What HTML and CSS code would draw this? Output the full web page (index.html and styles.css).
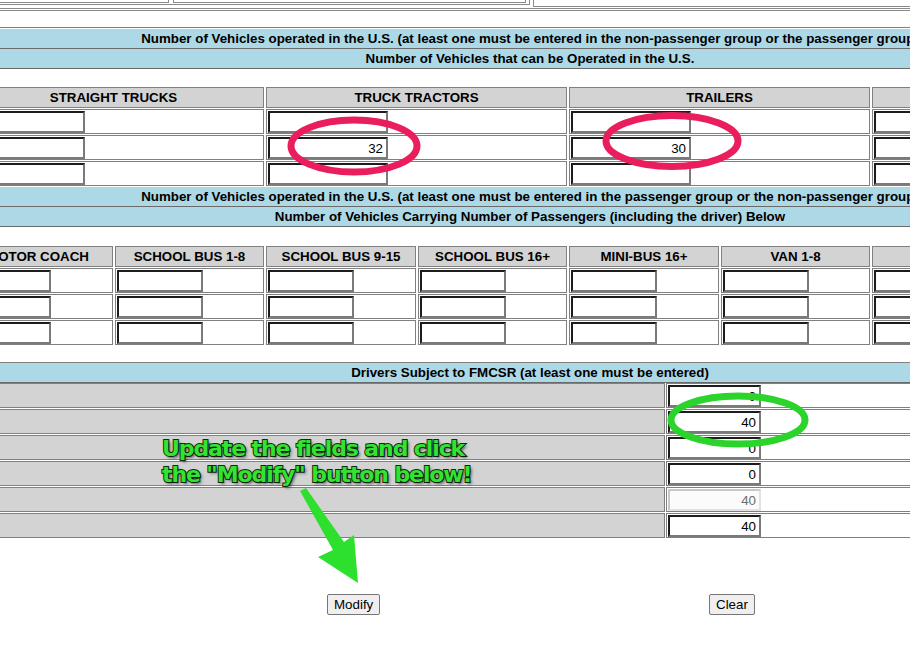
FILE: index.html
```html
<!DOCTYPE html>
<html>
<head>
<meta charset="utf-8">
<link rel="stylesheet" href="styles.css">
</head>
<body>
<div class="page">
  <div class="prev">
    <div class="prev-inner">
      <div class="prev-left">
        <div class="pl-a"></div>
        <div class="pl-b"></div>
      </div>
      <div class="prev-right"></div>
    </div>
  </div>

  <div class="blue-group first">
    <div class="bar">Number of Vehicles operated in the U.S. (at least one must be entered in the non-passenger group or the passenger group)</div>
    <div class="bar">Number of Vehicles that can be Operated in the U.S.</div>
  </div>

  <div class="vgrid trucks">
    <div class="hcell">STRAIGHT TRUCKS</div>
    <div class="hcell">TRUCK TRACTORS</div>
    <div class="hcell">TRAILERS</div>
    <div class="hcell"></div>
    <div class="hcell"></div>

    <div class="dcell"><input class="in w-t" type="text"></div>
    <div class="dcell"><input class="in w-t" type="text"></div>
    <div class="dcell"><input class="in w-t" type="text"></div>
    <div class="dcell"><input class="in w-t" type="text"></div>
    <div class="dcell"><input class="in w-t" type="text"></div>

    <div class="dcell"><input class="in w-t" type="text"></div>
    <div class="dcell"><input class="in w-t" type="text" value="32"></div>
    <div class="dcell"><input class="in w-t" type="text" value="30"></div>
    <div class="dcell"><input class="in w-t" type="text"></div>
    <div class="dcell"><input class="in w-t" type="text"></div>

    <div class="dcell"><input class="in w-t" type="text"></div>
    <div class="dcell"><input class="in w-t" type="text"></div>
    <div class="dcell"><input class="in w-t" type="text"></div>
    <div class="dcell"><input class="in w-t" type="text"></div>
    <div class="dcell"><input class="in w-t" type="text"></div>
  </div>

  <div class="blue-group tight">
    <div class="bar">Number of Vehicles operated in the U.S. (at least one must be entered in the passenger group or the non-passenger group)</div>
    <div class="bar">Number of Vehicles Carrying Number of Passengers (including the driver) Below</div>
  </div>

  <div class="vgrid pass">
    <div class="hcell">MOTOR COACH</div>
    <div class="hcell">SCHOOL BUS 1-8</div>
    <div class="hcell">SCHOOL BUS 9-15</div>
    <div class="hcell">SCHOOL BUS 16+</div>
    <div class="hcell">MINI-BUS 16+</div>
    <div class="hcell">VAN 1-8</div>
    <div class="hcell"></div>

    <div class="dcell"><input class="in w-p" type="text"></div>
    <div class="dcell"><input class="in w-p" type="text"></div>
    <div class="dcell"><input class="in w-p" type="text"></div>
    <div class="dcell"><input class="in w-p" type="text"></div>
    <div class="dcell"><input class="in w-p" type="text"></div>
    <div class="dcell"><input class="in w-p" type="text"></div>
    <div class="dcell"><input class="in w-p" type="text"></div>

    <div class="dcell"><input class="in w-p" type="text"></div>
    <div class="dcell"><input class="in w-p" type="text"></div>
    <div class="dcell"><input class="in w-p" type="text"></div>
    <div class="dcell"><input class="in w-p" type="text"></div>
    <div class="dcell"><input class="in w-p" type="text"></div>
    <div class="dcell"><input class="in w-p" type="text"></div>
    <div class="dcell"><input class="in w-p" type="text"></div>

    <div class="dcell"><input class="in w-p" type="text"></div>
    <div class="dcell"><input class="in w-p" type="text"></div>
    <div class="dcell"><input class="in w-p" type="text"></div>
    <div class="dcell"><input class="in w-p" type="text"></div>
    <div class="dcell"><input class="in w-p" type="text"></div>
    <div class="dcell"><input class="in w-p" type="text"></div>
    <div class="dcell"><input class="in w-p" type="text"></div>
  </div>

  <div class="blue-group drivers">
    <div class="bar">Drivers Subject to FMCSR (at least one must be entered)</div>
  </div>

  <div class="dgrid">
    <div class="lcell"></div>
    <div class="dcell"><input class="in w-d" type="text" value="0"></div>
    <div class="lcell"></div>
    <div class="dcell"><input class="in w-d" type="text" value="40"></div>
    <div class="lcell"></div>
    <div class="dcell"><input class="in w-d" type="text" value="0"></div>
    <div class="lcell"></div>
    <div class="dcell"><input class="in w-d" type="text" value="0"></div>
    <div class="lcell"></div>
    <div class="dcell"><input class="in w-d" type="text" value="40" disabled></div>
    <div class="lcell"></div>
    <div class="dcell"><input class="in w-d" type="text" value="40"></div>
  </div>

  <div class="actions">
    <button class="btn" type="button">Modify</button>
    <button class="btn" type="button">Clear</button>
  </div>
</div>

<div class="overlay">
  <svg class="marks" width="910" height="661" viewBox="0 0 910 661">
    <ellipse cx="354" cy="146" rx="63" ry="26" fill="none" stroke="#ea1e5d" stroke-width="7"/>
    <ellipse cx="672" cy="141" rx="66" ry="25.5" fill="none" stroke="#ea1e5d" stroke-width="7"/>
    <ellipse cx="738" cy="420" rx="67" ry="24" fill="none" stroke="#2bd42b" stroke-width="7"/>
    <polygon points="300,491 306,488 344,542 354,535 358,583 318,557 333,550" fill="#2ee02e"/>
  </svg>
  <div class="note">Update the fields and click<br>the "Modify" button below!</div>
</div>
</body>
</html>
```

FILE: styles.css
```css
* { box-sizing: border-box; }

body {
  margin: 0;
  width: 910px;
  height: 661px;
  overflow: hidden;
  position: relative;
  background: #ffffff;
  font-family: "Liberation Sans", Arial, sans-serif;
  color: #000;
}

.page {
  margin-left: -37px;
  width: 1134px;
}

/* remnants of the table above */
.prev {
  padding-bottom: 1px;
  border-bottom: 1px solid #8a8a8a;
}
.prev-inner {
  display: flex;
  height: 9px;
  border-bottom: 1px solid #8a8a8a;
}
.prev-left {
  display: flex;
  width: 567px;
  height: 5px;
  border-right: 1px solid #8a8a8a;
  border-bottom: 1px solid #8a8a8a;
}
.pl-a {
  width: 206px;
  height: 3px;
  border-right: 1px solid #8a8a8a;
  border-bottom: 1px solid #8a8a8a;
}
.pl-b {
  flex: 1;
  height: 3px;
  margin-left: 4px;
  margin-right: 3px;
  border-left: 1px solid #8a8a8a;
  border-right: 1px solid #8a8a8a;
  border-bottom: 1px solid #8a8a8a;
}
.prev-right {
  flex: 1;
  height: 7px;
  margin-left: 3px;
  border-left: 1px solid #8a8a8a;
  border-bottom: 1px solid #8a8a8a;
}

/* blue title bars */
.blue-group.first {
  margin-top: 16px;
  border-top: 1px solid #808080;
  padding-top: 1px;
}
.blue-group.tight {
  margin-top: 1px;
}
.blue-group.drivers {
  margin-top: 17px;
  border-top: 1px solid #808080;
}
.bar {
  height: 20px;
  line-height: 19px;
  background: #add8e6;
  border-bottom: 1px solid #6a6a6a;
  text-align: center;
  font-weight: bold;
  font-size: 13.33px;
  white-space: nowrap;
  overflow: hidden;
}

/* vehicle grids */
.vgrid {
  display: grid;
  column-gap: 2px;
  row-gap: 1px;
  width: max-content;
}
.trucks {
  margin-top: 18px;
  grid-template-columns: repeat(5, 301px);
}
.pass {
  margin-top: 19px;
  grid-template-columns: 150px 149px 150px 149px 150px 149px 150px;
}
.hcell {
  height: 21px;
  line-height: 19px;
  background: #d3d3d3;
  border: 1px solid #808080;
  text-align: center;
  font-weight: bold;
  font-size: 13.33px;
  white-space: nowrap;
  overflow: hidden;
}
.dcell {
  height: 25px;
  padding: 1px 1px 0;
  border: 1px solid #808080;
  background: #fff;
}

/* drivers */
.dgrid {
  display: grid;
  grid-template-columns: 702px 431px;
  column-gap: 1px;
  row-gap: 1px;
}
.lcell {
  height: 25px;
  background: #d3d3d3;
  border: 1px solid #808080;
}

/* inputs */
.in {
  display: block;
  height: 22px;
  margin: 0;
  padding: 0 3px 0 3px;
  border-style: solid;
  border-width: 2px;
  border-color: #1c1c1c #7a7a7a #7a7a7a #1c1c1c;
  background: #fff;
  font-family: "Liberation Sans", Arial, sans-serif;
  font-size: 13.33px;
  color: #000;
  text-align: right;
}
.in:disabled {
  border-color: #c8c8c8 #e2e2e2 #e2e2e2 #c8c8c8;
  color: #6d6d6d;
  background: #fbfbfb;
}
.w-t { width: 120px; }
.w-p { width: 86px; }
.w-d { width: 93px; }

/* buttons */
.actions {
  display: grid;
  grid-template-columns: 382px max-content;
  justify-items: start;
  margin-top: 56px;
  padding-left: 364px;
}
.btn {
  height: 21px;
  padding: 1px 6px;
  border: 1px solid #767676;
  border-radius: 2px;
  background: #efefef;
  font-family: "Liberation Sans", Arial, sans-serif;
  font-size: 13.33px;
  color: #000;
}

/* annotation overlay */
.overlay {
  position: absolute;
  left: 0;
  top: 0;
  width: 910px;
  height: 661px;
  pointer-events: none;
}
.marks {
  position: absolute;
  left: 0;
  top: 0;
}
.note {
  position: absolute;
  left: 162px;
  top: 436px;
  font-family: "DejaVu Sans", sans-serif;
  font-weight: bold;
  font-size: 22px;
  letter-spacing: -1.1px;
  line-height: 26px;
  white-space: nowrap;
  color: #33e233;
  -webkit-text-stroke: 2px #0a2e0a;
  paint-order: stroke fill;
  text-shadow: 2px 2px 3px rgba(0, 0, 0, 0.55);
}
```
